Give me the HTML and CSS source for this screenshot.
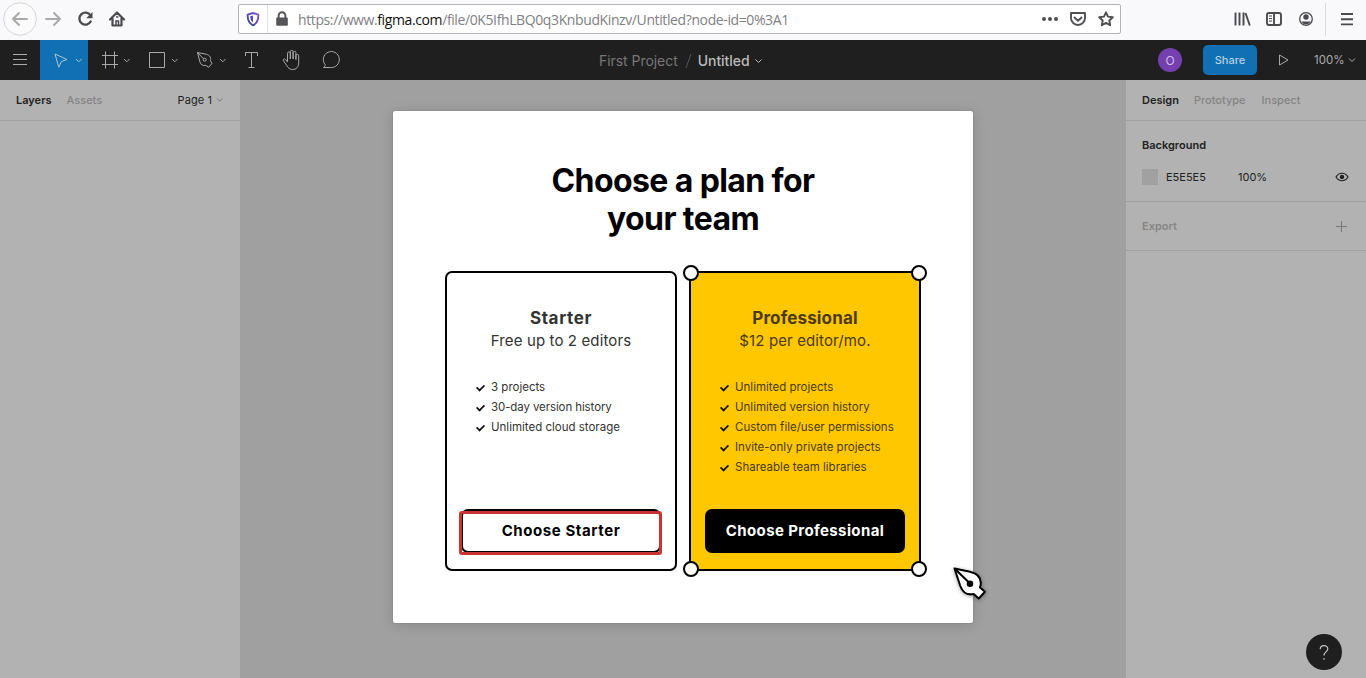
FILE: index.html
```html
<!DOCTYPE html>
<html lang="en">
<head>
<meta charset="utf-8">
<title>Untitled – Figma</title>
<link rel="stylesheet" href="styles.css">
</head>
<body>
<div class="app">
  <header class="browser">
    <div class="nav">
      <svg width="130" height="40" viewBox="0 0 130 40" fill="none">
        <circle cx="20" cy="19" r="16.3" fill="#fbfbfc" stroke="#d5d5d8"/>
        <g stroke="#aaaaad" stroke-width="2" stroke-linecap="round" stroke-linejoin="round"><path d="M27 19H13.5M19 13l-6 6 6 6M46 19h13.500M54 13l6 6-6 6"/></g>
        <path d="M90.500 15.500A6 6 0 1 0 90.700 21.500" stroke="#4a4a4f" stroke-width="2.300" stroke-linecap="round"/><path d="M92.500 12v6.300h-6.300z" fill="#4a4a4f"/>
        <path d="M110 19.500l7-7 7 7M112.500 18v7.500h9V18" stroke="#4a4a4f" stroke-width="2.200" stroke-linecap="round" stroke-linejoin="round"/><path d="M116 25v-4h2.500v4M116 17h2.400" stroke="#4a4a4f" stroke-width="1.500"/>
      </svg>
    </div>
    <div class="address">
      <svg class="shield" width="28" height="28" viewBox="0 0 28 28" fill="none"><defs><linearGradient id="sh" x1="1" y1="0" x2="0" y2="1"><stop stop-color="#8454d8"/><stop offset="1" stop-color="#30458f"/></linearGradient></defs><path d="M14 8l5.300 1.600c.3 5-1.300 8.700-5.300 10.700-4-2-5.600-5.700-5.300-10.700z" stroke="url(#sh)" stroke-width="1.900" stroke-linejoin="round"/><path d="M14 10.500v7c-2-1.300-2.800-3.300-2.800-6.200z" fill="#5350b5"/></svg>
      <svg class="lock" width="30" height="28" viewBox="0 0 30 28"><rect x="8.500" y="12.500" width="12" height="8.500" rx="1" fill="#555558"/><path d="M11 13v-2.500a3.500 3.500 0 0 1 7 0V13" fill="none" stroke="#555558" stroke-width="2"/></svg>
      <span class="url">https://www.<b>figma.com</b>/file/0K5IfhLBQ0q3KnbudKinzv/Untitled?node-id=0%3A1</span>
      <svg class="page-actions" width="83" height="28" viewBox="0 0 83 28" fill="none" stroke="#4f4f53" stroke-width="1.900" stroke-linejoin="round" stroke-linecap="round"><g fill="#4f4f53" stroke="none"><circle cx="7" cy="14" r="2"/><circle cx="13" cy="14" r="2"/><circle cx="19" cy="14" r="2"/></g><path d="M34 8h14v5a7 7 0 0 1-14 0zM37.500 12.500l3.500 3.200 3.500-3.200"/><path d="M69 7.300l2 4.300 4.800.6-3.500 3.300.9 4.800-4.200-2.400-4.200 2.400.9-4.800-3.500-3.300 4.800-.6z"/></svg>
    </div>
    <div class="browser-tools">
      <svg width="150" height="40" viewBox="0 0 150 40" fill="none" stroke="#4a4a4f" stroke-width="1.900">
        <path d="M19.500 12.500v13M23.500 12.500v13M27.500 12.500v13M29.500 13l4.300 12.500"/><rect x="51" y="13" width="14" height="12" rx="2"/><path d="M58 13v12"/><path d="M53 16h3M53 18.500h3M53 21h3" stroke-width="1"/>
        <circle cx="90" cy="19" r="6.300" stroke-width="1.300"/><circle cx="90" cy="17" r="2.700" fill="#4a4a4f" stroke="none"/><path d="M85.500 21.500h9c-1 2-2.500 3-4.500 3s-3.500-1-4.500-3z" fill="#4a4a4f" stroke="none"/>
        <path d="M109.500 3v33" stroke="#dddde0" stroke-width="1"/><path d="M125 14h12M125 19.200h12M125 24.400h12"/>
      </svg>
    </div>
  </header>

  <nav class="toolbar">
    <div class="tools">
      <div class="tool menu"><svg width="40" height="40" fill="none" stroke="#aaa"><path d="M13 14.500h14M13 19.500h14M13 24.500h14"/></svg></div>
      <div class="tool active"><svg width="48" height="40" fill="none" stroke="#a9c7dc" stroke-linejoin="round"><path d="M15 14l12 5.500-5.500 2-2.800 5.700zM36 19l2.800 2.800 2.800-2.800"/></svg></div>
      <div class="tool"><svg width="48" height="40" fill="none" stroke="#aaa"><path d="M17.500 11.500v17M26.500 11.500v17M14 15.500h16M14 24.500h16"/><path d="M36 19l2.800 2.800 2.800-2.800"/></svg></div>
      <div class="tool"><svg width="48" height="40" fill="none" stroke="#aaa"><path d="M13.500 12.500h15v15h-15zM36 19l2.800 2.800 2.800-2.800"/></svg></div>
      <div class="tool"><svg width="48" height="40" fill="none" stroke="#aaa" stroke-linejoin="round"><path d="M13.500 12.500l9 1.800c3.200.8 4.800 3.300 3.900 6.500l1.600 2.600-3.500 4-2.600-2c-3 .5-5.200-.7-6-3.500zM13.500 12.500l6.200 6.500"/><circle cx="20.700" cy="19.700" r="1.500"/><path d="M36 19l2.800 2.800 2.800-2.800"/></svg></div>
      <div class="tool single"><svg width="40" height="40" fill="none" stroke="#aaa"><path d="M13.500 16v-3.500h12V16M19.500 12.500v15M16.500 27.500h6"/></svg></div>
      <div class="tool single"><svg width="40" height="40" fill="none" stroke="#aaa" stroke-linecap="round" stroke-linejoin="round"><path d="M15.500 21.500v-8.200a1.400 1.400 0 0 1 2.800 0V19v-7.300a1.400 1.400 0 0 1 2.800 0V19v-6.300a1.400 1.400 0 0 1 2.800 0V19.500v-3.700a1.400 1.400 0 0 1 2.800 0v6.700c0 4.500-2.500 7-6 7-3 0-4.500-1.500-6-4l-3.200-4.700c-.8-1.700 1-2.700 2-1.500z"/></svg></div>
      <div class="tool single"><svg width="40" height="40" fill="none" stroke="#aaa" stroke-linejoin="round"><path d="M11.500 27.500c1.200-1 1.700-1.500 1.700-2.800a8 8 0 1 1 5.300 2.800z"/></svg></div>
    </div>
    <div class="file-title"><span>First Project</span><svg class="slash" width="7" height="16" stroke="#555"><path d="M6 1L1 15"/></svg><strong>Untitled</strong><svg width="9" height="6" fill="none" stroke="#bbb"><path d="M1.500 1.500l3 3 3-3"/></svg></div>
    <div class="file-actions">
      <span class="avatar">O</span>
      <span class="share">Share</span>
      <svg class="play" width="12" height="14" fill="none" stroke="#aaa" stroke-linejoin="round"><path d="M1.500 2v10l8.500-5z"/></svg>
      <span class="zoom">100%</span>
      <svg width="8" height="6" fill="none" stroke="#aaa"><path d="M1 1.500l3 3 3-3"/></svg>
    </div>
  </nav>

  <main class="workspace">
    <aside class="left">
      <div class="tabs"><b>Layers</b><span>Assets</span><em>Page 1</em><svg width="8" height="6" fill="none" stroke="#777"><path d="M1 1.500l2.700 2.700 2.700-2.700"/></svg></div>
    </aside>
    <section class="canvas">
      <div class="dialog">
        <h1>Choose a plan for<br>your team</h1>
        <div class="plans">
          <article class="plan">
            <h2>Starter</h2>
            <p class="price">Free up to 2 editors</p>
            <ul>
              <li>3 projects</li>
              <li class="history">30-day version history</li>
              <li>Unlimited cloud storage</li>
            </ul>
            <div class="button outline"><span>Choose Starter</span><div class="highlight"></div></div>
          </article>
          <article class="plan pro">
            <h2>Professional</h2>
            <p class="price">$12 per editor/mo.</p>
            <ul>
              <li>Unlimited projects</li>
              <li>Unlimited version history</li>
              <li>Custom file/user permissions</li>
              <li>Invite-only private projects</li>
              <li>Shareable team libraries</li>
            </ul>
            <div class="button solid"><span>Choose Professional</span></div>
            <i class="handle tl"></i><i class="handle tr"></i><i class="handle bl"></i><i class="handle br"></i>
          </article>
        </div>
        <svg class="pen" width="42" height="42" viewBox="0 0 42 42" fill="#fff" stroke="#000" stroke-width="2" stroke-linejoin="round"><path d="M4.500 5.500L20 8.700C27 10.300 31.500 14.500 30.700 21.500L30 24.500L35 28.800L28.700 35.500L23.700 31C17 32.500 12.500 29 10.300 23z"/><path d="M4.500 5.500l15.500 15" fill="none"/><circle cx="20" cy="20.700" r="2.300" fill="#000"/></svg>
      </div>
    </section>
    <aside class="right">
      <div class="tabs"><b>Design</b><span class="proto">Prototype</span><span>Inspect</span></div>
      <div class="background">
        <b>Background</b>
        <div class="fill"><i class="swatch"></i><span class="hex">E5E5E5</span><span>100%</span><svg width="14" height="10" fill="none" stroke="#222" stroke-width="1.200"><path d="M1 5c3-5 9-5 12 0-3 5-9 5-12 0z"/><circle cx="7" cy="5" r="1.600" fill="#222"/></svg></div>
      </div>
      <div class="export"><b>Export</b><svg width="11" height="11" stroke="#777"><path d="M5.500 0v11M0 5.500h11"/></svg></div>
    </aside>
    <div class="help"><svg width="36" height="36" fill="none" stroke="#c4c4c4" stroke-width="1.200"><path d="M14.200 15.200c0-5 7.600-4.600 7.600-.4 0 3-3.800 3.300-3.800 6.700M18 24v1.800"/></svg></div>
  </main>
</div>
</body>
</html>
```
FILE: styles.css
```css
* { box-sizing: border-box; }
body { margin: 0; font: 11px/16px Inter, "Liberation Sans", sans-serif; color: #222; }
svg { display: block; flex: none; }
i, em { font-style: normal; }
.app { width: 1366px; height: 678px; display: flex; flex-direction: column; overflow: hidden; }

.browser { height: 40px; flex: none; display: flex; align-items: flex-start; background: #f9f9fb; }
.nav { width: 238px; }
.address { width: 883px; height: 30px; margin-top: 4px; display: flex; align-items: center; background: #fff; border: 1px solid #b5b5b9; border-radius: 2px; }
.lock { border-left: 1px solid #e2e2e4; margin-right: 2px; }
.url { flex: 1; font: 14px/20px "Open Sans", "Noto Sans", sans-serif; color: #808084; white-space: nowrap; padding-top: 1px; margin-left: -1px; letter-spacing: -.39px; }
.url b { font-weight: 400; color: #111; }
.browser-tools { margin-left: 95px; }

.toolbar { height: 40px; flex: none; display: flex; background: #1f1f1f; color: #aaa; }
.tools { width: 599px; display: flex; }
.tool { width: 48px; height: 40px; }
.tool.menu, .tool.single { width: 40px; }
.tool.active { background: #1170b3; }
.file-title { flex: 1; display: flex; align-items: center; font-size: 14px; color: #777; padding-top: 2px; letter-spacing: -.05px; }
.slash { margin: 0 6px 0 7px; }
.file-title strong { font-weight: 500; color: #bbb; margin-right: 4px; }
.file-actions { display: flex; align-items: center; padding-right: 10px; }
.avatar { width: 24px; height: 24px; border-radius: 50%; background: #7440b0; color: #d3bde8; font-size: 12px; line-height: 25px; text-align: center; }
.share { width: 54px; height: 30px; margin-left: 21px; border-radius: 5px; background: #1170b3; color: #b6d0e2; font-weight: 500; line-height: 30px; text-align: center; }
.play { margin: 0 24px 0 21px; }
.zoom { width: 34px; font-size: 11.500px; }

.workspace { flex: 1; display: flex; position: relative; background: #a0a0a0; }
.left { width: 240px; background: #b2b2b2; }
.right { width: 240px; background: #b2b2b2; }
.canvas { flex: 1; display: flex; justify-content: center; align-items: flex-start; padding-top: 31px; }
.tabs { height: 41px; display: flex; align-items: center; padding: 0 16px; border-bottom: 1px solid #a0a0a0; color: #848484; font-weight: 500; }
.tabs b { color: #222; font-weight: 600; margin-right: 15px; }
.tabs em { margin: 0 4px 0 auto; color: #222; font-weight: 400; letter-spacing: .08px; }
.proto { margin-right: 16px; }
.background { height: 81px; padding: 16px; border-bottom: 1px solid #a0a0a0; }
.background b, .export b { font-weight: 600; }
.fill { display: flex; align-items: center; margin-top: 16px; }
.fill svg { margin: 0 1px 0 auto; }
.swatch { width: 16px; height: 16px; background: #a1a1a1; margin-right: 8px; }
.hex { width: 72px; }
.export { height: 49px; display: flex; align-items: center; justify-content: space-between; padding: 0 19px 0 16px; border-bottom: 1px solid #a0a0a0; color: #858585; }

.dialog { width: 580px; height: 512px; position: relative; background: #fff; border-radius: 2px; padding: 51px 52px 0; box-shadow: 0 2px 14px rgba(0,0,0,.15), 0 0 1px rgba(0,0,0,.5); }
h1 { margin: 0; color: #000; font-size: 32px; line-height: 38px; font-weight: 650; text-align: center; letter-spacing: -.6px; }
.plans { display: flex; gap: 12px; margin-top: 33px; }
.plan { width: 232px; height: 300px; position: relative; display: flex; flex-direction: column; border: 2px solid #000; border-radius: 7px; padding: 33px 14px 16px; color: #333; }
h2 { margin: 0; font-size: 17px; line-height: 24px; font-weight: 700; text-align: center; letter-spacing: .65px; }
.pro h2 { letter-spacing: .15px; }
.price { margin: -1px 0 0; font-size: 15px; line-height: 24px; text-align: center; letter-spacing: .12px; }
.plan ul { margin: 24px 0 0; padding: 0 0 0 30px; list-style: none; font-size: 11.500px; line-height: 21px; white-space: nowrap; }
.plan li { position: relative; height: 20px; }
.history { letter-spacing: -.1px; }
.plan li::before { content: ""; position: absolute; left: -15px; top: 7px; width: 7px; height: 4px; border: solid #111; border-width: 0 0 2px 2px; transform: rotate(-45deg) scale(.86); }
.button { height: 44px; position: relative; margin-top: auto; border-radius: 7px; font-size: 15px; line-height: 43px; font-weight: 700; text-align: center; color: #000; white-space: nowrap; letter-spacing: .38px; }
.outline { border: 2px solid #000; line-height: 39px; letter-spacing: .58px; }
.highlight { position: absolute; left: -4px; top: 0; width: 203px; height: 44px; border: 3px solid #c93433; border-radius: 3px; }
.solid { background: #000; color: #fff; }
.pro { background: #ffc700; border-radius: 0; color: #4c3a13; }
.handle { position: absolute; width: 16px; height: 16px; border: 2px solid #000; border-radius: 50%; background: #fff; }
.tl { left: -8px; top: -8px; }
.tr { right: -8px; top: -8px; }
.bl { left: -8px; bottom: -8px; }
.br { right: -8px; bottom: -8px; }
.pen { position: absolute; left: 557px; top: 452px; filter: drop-shadow(0 1px 2px rgba(0,0,0,.35)); }
.help { position: absolute; right: 24px; bottom: 8px; width: 36px; height: 36px; border-radius: 50%; background: #1f1f1f; }
```
